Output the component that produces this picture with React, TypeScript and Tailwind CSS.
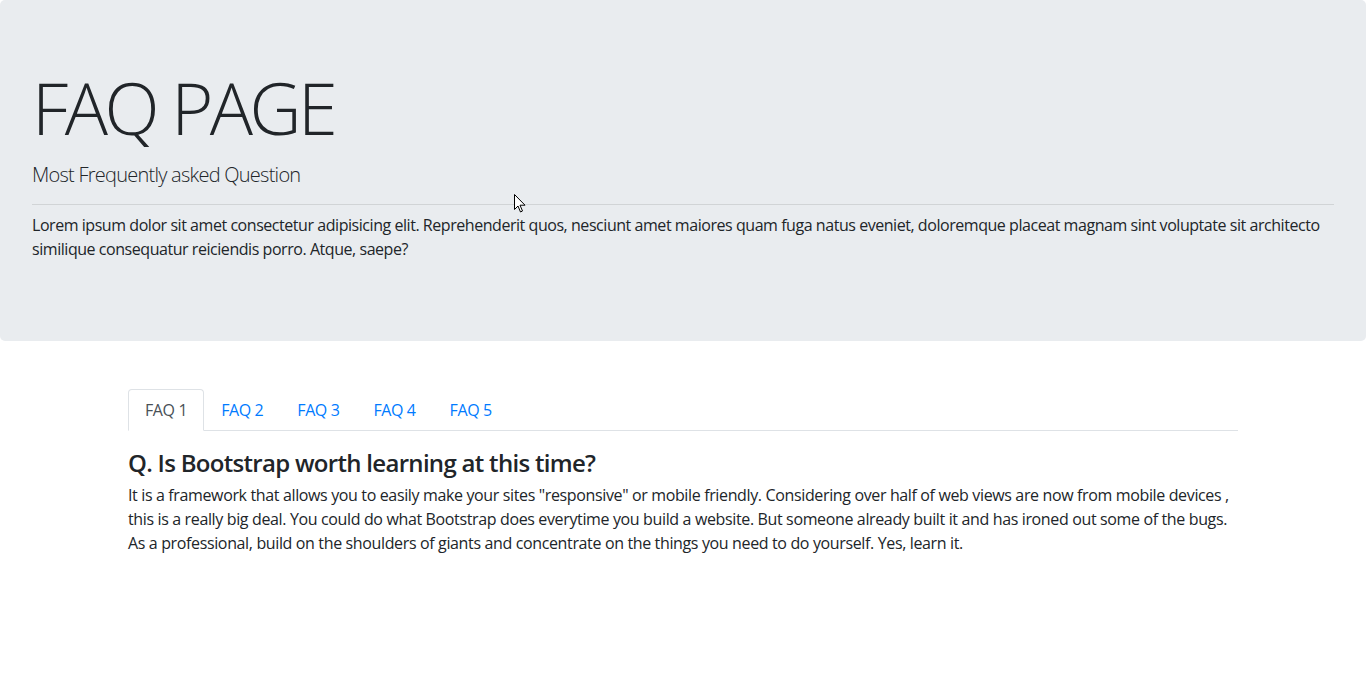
const tabs = ["FAQ 1", "FAQ 2", "FAQ 3", "FAQ 4", "FAQ 5"];

export default function App() {
  return (
    <div className="relative min-h-screen bg-white text-[#212529] font-['Open_Sans',sans-serif] tracking-[-0.45px]">
      {/* jumbotron */}
      <div className="bg-[#e9ecef] rounded-[5px] px-8 py-16 mb-8">
        <h1 className="text-[72px] leading-[1.2] font-light tracking-[-3.5px] mb-[10px]">FAQ PAGE</h1>
        <p className="text-[20px] leading-[30px] font-light tracking-[-0.75px]">Most Frequently asked Question</p>
        <hr className="mt-[14px] mb-2 border-0 border-t border-black/10" />
        <p className="text-base leading-6 mb-4">
          Lorem ipsum dolor sit amet consectetur adipisicing elit. Reprehenderit quos, nesciunt amet maiores quam fuga natus eveniet, doloremque placeat magnam sint voluptate sit architecto similique consequatur reiciendis porro. Atque, saepe?
        </p>
      </div>

      <div className="w-[1110px] mx-auto pt-4">
        <ul className="flex border-b border-[#dee2e6]">
          {tabs.map((t, i) => (
            <li key={t} className="-mb-px">
              <a
                href="#"
                className={
                  i === 0
                    ? "block px-4 py-2 text-base leading-6 text-[#495057] bg-white border border-[#dee2e6] border-b-white rounded-t tracking-[-0.4px]"
                    : "block px-4 py-2 text-base leading-6 text-[#007bff] border border-transparent tracking-[-0.4px]"
                }
              >
                {t}
              </a>
            </li>
          ))}
        </ul>
        <div className="pt-[18px]">
          <h4 className="text-2xl leading-[1.2] font-semibold mb-[5px] tracking-[-0.7px]">Q. Is Bootstrap worth learning at this time?</h4>
          <p className="text-base leading-6 tracking-[-0.36px]">
            It is a framework that allows you to easily make your sites "responsive" or mobile friendly. Considering over half of web views are now from mobile devices , this is a really big deal. You could do what Bootstrap does everytime you build a website. But someone already built it and has ironed out some of the bugs. As a professional, build on the shoulders of giants and concentrate on the things you need to do yourself. Yes, learn it.
          </p>
        </div>
      </div>

      {/* mouse pointer in the screenshot */}
      <svg className="absolute left-[514px] top-[194px]" width="12" height="19" viewBox="0 0 12 19">
        <path d="M0.5 0.5 L0.5 15.5 L4 12 L6.5 18 L8.5 17 L6 11.2 L11 11.2 Z" fill="white" stroke="black" strokeWidth="1" />
      </svg>
    </div>
  );
}
